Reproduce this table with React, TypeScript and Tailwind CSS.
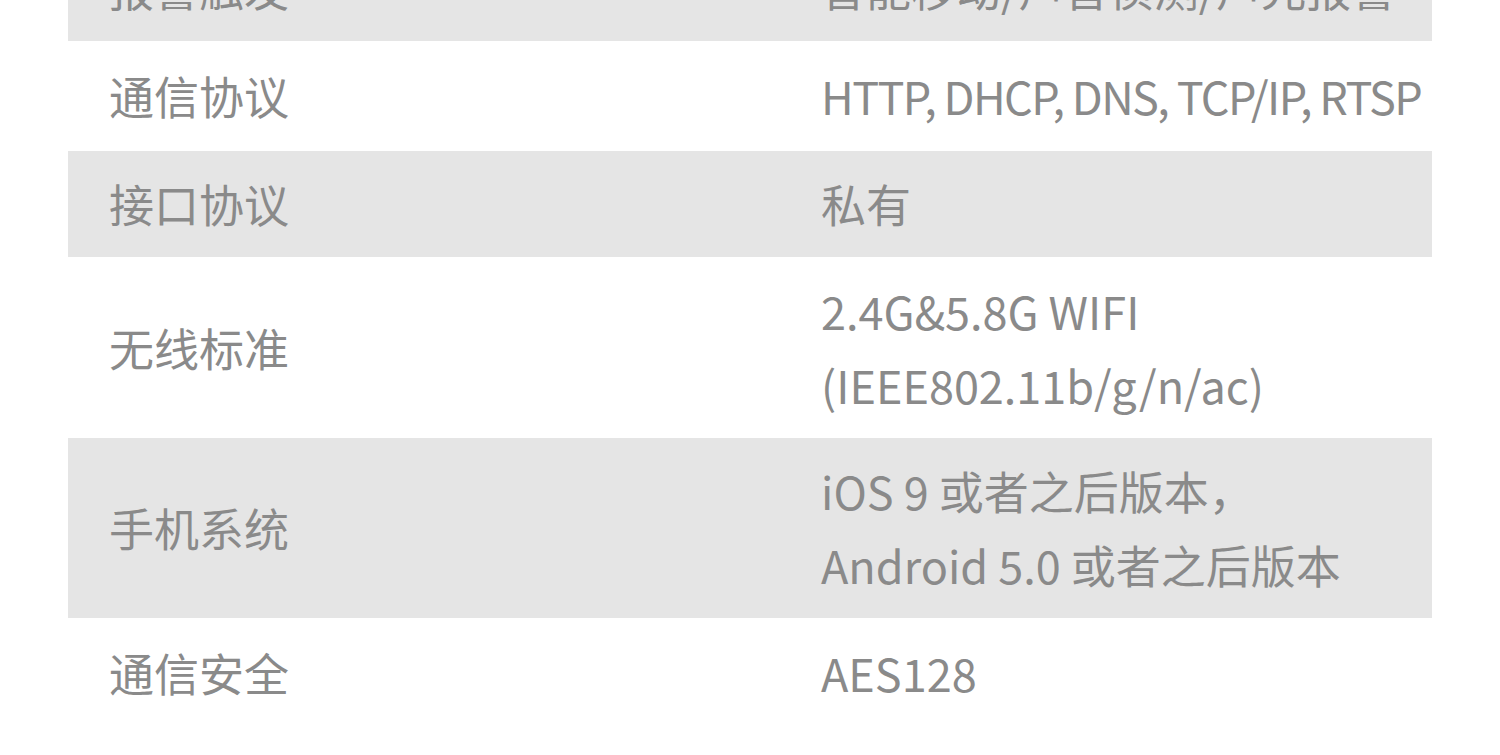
import React from "react";

type Row = { label: string; lines: string[]; gray: boolean; h: string; tight?: boolean };

const rows: Row[] = [
  { label: "报警触发", lines: ["智能移动/声音侦测/声光报警"], gray: true, h: "h-[107px]" },
  { label: "通信协议", lines: ["HTTP, DHCP, DNS, TCP/IP, RTSP"], gray: false, h: "h-[110px]", tight: true },
  { label: "接口协议", lines: ["私有"], gray: true, h: "h-[106px]" },
  { label: "无线标准", lines: ["2.4G&5.8G WIFI", "(IEEE802.11b/g/n/ac)"], gray: false, h: "h-[181px]" },
  { label: "手机系统", lines: ["iOS 9 或者之后版本，", "Android 5.0 或者之后版本"], gray: true, h: "h-[180px]" },
  { label: "通信安全", lines: ["AES128"], gray: false, h: "h-[110px]" },
];

export default function App() {
  return (
    <div
      className="w-[1500px] h-[755px] overflow-hidden bg-white text-[#8a8a8a]"
      style={{ fontFamily: '"Noto Sans CJK SC", "Noto Sans", sans-serif' }}
    >
      <div className="mx-[68px] -mt-[66px] flex flex-col">
        {rows.map((r, i) => (
          <div
            key={i}
            className={`grid grid-cols-[712px_1fr] items-center ${r.h} text-[45px] leading-[74px] whitespace-nowrap ${
              r.gray ? "bg-[#e5e5e5]" : "bg-white"
            }`}
          >
            <div className="pl-[41px]">{r.label}</div>
            <div className={`pl-[41px] flex flex-col ${r.tight ? "tracking-[-1.6px]" : ""}`}>
              {r.lines.map((l, j) => (
                <span key={j}>{l}</span>
              ))}
            </div>
          </div>
        ))}
      </div>
    </div>
  );
}
